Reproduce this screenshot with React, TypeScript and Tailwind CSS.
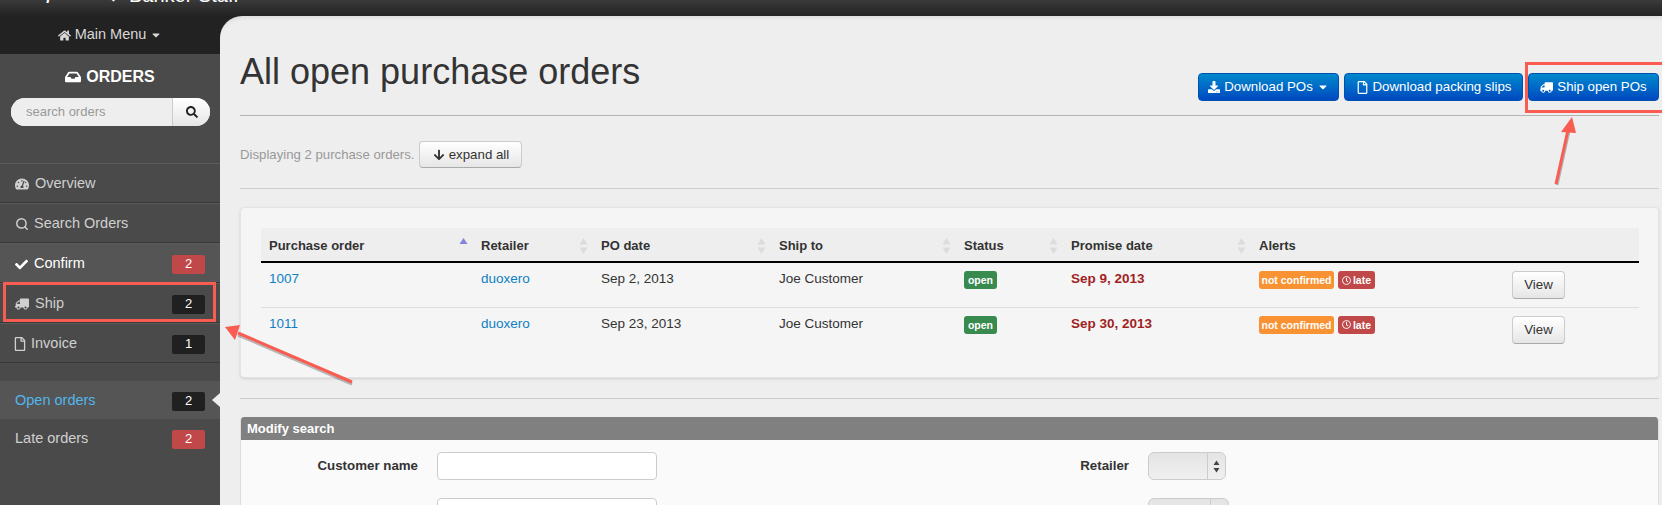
import { FaHome, FaInbox, FaSearch, FaTachometerAlt, FaCheck, FaTruck, FaRegFile, FaDownload, FaArrowDown, FaRegClock, FaCaretDown } from 'react-icons/fa';
import { Search } from 'lucide-react';
import type { ReactNode } from 'react';

function SideRow({ icon, label, count, tone, bright }: { icon: ReactNode; label: string; count: number; tone: 'dark' | 'red'; bright?: boolean }) {
  return (
    <div className={`flex h-[40px] items-center border-b border-b-[#383838] border-t border-t-[#5a5a5a] pl-[15px] pr-[15px] pt-[2px] text-[14.5px] ${bright ? 'bg-[#555555] text-white' : 'text-[#d0d0d0]'}`}>
      {icon}
      <span className="flex-1">{label}</span>
      {count > 0 && <Badge count={count} tone={tone} />}
    </div>
  );
}

function Badge({ count, tone }: { count: number; tone: 'dark' | 'red' }) {
  return (
    <span className={`flex h-[19px] w-[33px] items-center justify-center rounded-[2px] text-[13px] text-white ${tone === 'red' ? 'bg-[#c04848]' : 'bg-[#202020]'}`}>
      {count}
    </span>
  );
}

function BlueButton({ children }: { children: ReactNode }) {
  return (
    <button className="flex h-[28px] items-center justify-center rounded-[4px] border border-[#0050b0] bg-gradient-to-b from-[#0088cc] to-[#0048c0] text-[13.3px] text-white">
      {children}
    </button>
  );
}

function SortArrows({ active }: { active?: boolean }) {
  return (
    <svg width="9" height="16" viewBox="0 0 9 16" className="shrink-0">
      {active ? (
        <path d="M4.5 0 L8.5 6 L0.5 6 Z" fill="#8484d8" />
      ) : (
        <>
          <path d="M4.5 0 L8.5 6.5 L0.5 6.5 Z" fill="#dcdcdc" />
          <path d="M4.5 16 L8.5 9.5 L0.5 9.5 Z" fill="#dcdcdc" />
        </>
      )}
    </svg>
  );
}

function Th({ label, arrows, active }: { label?: string; arrows?: boolean; active?: boolean }) {
  return (
    <th className="h-[34px] border-b-2 border-b-black p-0 pl-[8px] pr-[5px] pt-[2px] text-left text-[13px] font-bold text-[#333333]">
      <div className="flex items-center justify-between">
        <span>{label}</span>
        {arrows && <SortArrows active={active} />}
      </div>
    </th>
  );
}

const orders = [
  { id: '1007', poDate: 'Sep 2, 2013', promise: 'Sep 9, 2013' },
  { id: '1011', poDate: 'Sep 23, 2013', promise: 'Sep 30, 2013' },
];

function OrderRow({ id, poDate, promise, last }: { id: string; poDate: string; promise: string; last: boolean }) {
  const cell = 'h-[45px] p-0 pl-[8px] pt-[6px] align-top text-[13.5px] leading-[20px]';
  return (
    <tr className={last ? '' : 'border-b border-b-[#dddddd]'}>
      <td className={`${cell} text-[#0f80c4]`}>{id}</td>
      <td className={`${cell} text-[#0f80c4]`}>duoxero</td>
      <td className={`${cell} text-[#333333]`}>{poDate}</td>
      <td className={`${cell} text-[#333333]`}>Joe Customer</td>
      <td className={cell}>
        <span className="mt-[2px] flex h-[18px] w-[33px] items-center justify-center rounded-[3px] bg-[#398a4f] text-[10.5px] font-bold text-white">open</span>
      </td>
      <td className={`${cell} font-bold text-[#a01f24]`}>{promise}</td>
      <td className={cell}>
        <div className="mt-[2px] flex gap-[4px]">
          <span className="flex h-[18px] w-[75px] items-center justify-center rounded-[3px] bg-[#f89232] text-[10.5px] font-bold whitespace-nowrap text-white">not confirmed</span>
          <span className="flex h-[18px] w-[37px] items-center justify-center gap-[2px] rounded-[3px] bg-[#c04848] text-[10.5px] font-bold text-white">
            <FaRegClock className="text-[9px]" />late
          </span>
        </div>
      </td>
      <td className={cell}>
        <button className="mt-[2px] h-[28px] w-[53px] rounded-[4px] border border-[#cccccc] border-b-[#aaaaaa] bg-gradient-to-b from-white to-[#e6e6e6] text-[13.3px] text-[#333333]">View</button>
      </td>
    </tr>
  );
}

function SelectBox({ width }: { width: string }) {
  return (
    <div className={`flex h-[28px] ${width} rounded-[6px] border border-[#cccccc] bg-gradient-to-b from-[#e4e4e4] to-[#f0f0f0]`}>
      <div className="flex-1" />
      <div className="flex w-[18px] items-center justify-center border-l border-l-[#cccccc]">
        <svg width="7" height="13" viewBox="0 0 7 13">
          <path d="M3.5 0.5 L6.5 5 L0.5 5 Z M3.5 12.5 L6.5 8 L0.5 8 Z" fill="#444444" />
        </svg>
      </div>
    </div>
  );
}

export default function App() {
  return (
    <div className="relative h-[505px] w-[1662px] overflow-hidden bg-[#222222] font-['Liberation_Sans',Arial,sans-serif]">
      {/* top nav, mostly cropped off */}
      <div className="h-[16px] overflow-hidden bg-gradient-to-b from-[#3a3a3a] to-[#222222] pl-[20px]">
        <div className="-mt-[17px] flex h-[24px] items-center leading-[24px] text-white">
          <span className="w-[88px] text-[15px] font-bold italic whitespace-nowrap">shopatron</span>
          <span className="w-[21px] text-[14px]">◆</span>
          <span className="text-[20px] whitespace-nowrap">Banker Staff</span>
        </div>
      </div>

      <div className="flex h-[489px]">
        {/* sidebar */}
        <aside className="w-[220px] shrink-0">
          <div className="flex h-[38px] items-center justify-center gap-[4px] text-[14.5px] text-[#d8d8d8]">
            <FaHome className="text-[13px]" />
            <span>Main Menu</span>
            <FaCaretDown className="text-[12px]" />
          </div>
          <div className="relative h-[451px] bg-[#4a4a4a]">
            <div className="h-[109px] px-[11px] pt-[11px]">
              <div className="flex items-center justify-center gap-[5px] text-[16px] font-bold text-white">
                <FaInbox className="text-[16px]" />
                ORDERS
              </div>
              <div className="mt-[9px] flex h-[28px] w-[199px] overflow-hidden rounded-full bg-[#eeeeee]">
                <input placeholder="search orders" className="w-[161px] bg-[#eeeeee] pl-[15px] text-[13px] outline-none placeholder:text-[#999999]" />
                <div className="flex flex-1 items-center justify-center border-l border-l-[#cccccc] bg-gradient-to-b from-white to-[#e6e6e6]">
                  <FaSearch className="text-[12px] text-[#222222]" />
                </div>
              </div>
            </div>
            <SideRow icon={<FaTachometerAlt className="mr-[6px] text-[14px]" />} label="Overview" count={0} tone="dark" />
            <SideRow icon={<Search size={14} strokeWidth={2.5} className="mr-[5px]" />} label="Search Orders" count={0} tone="dark" />
            <SideRow bright icon={<FaCheck className="mr-[6px] text-[13px]" />} label="Confirm" count={2} tone="red" />
            <SideRow icon={<FaTruck className="mr-[6px] -scale-x-100 text-[14px]" />} label="Ship" count={2} tone="dark" />
            <SideRow icon={<FaRegFile className="-ml-[2px] mr-[4px] text-[14px]" />} label="Invoice" count={1} tone="dark" />
            <div className="h-[18px]" />
            <div className="relative flex h-[38px] items-center bg-[#555555] pl-[15px] pr-[15px] pt-[2px] text-[14.5px] text-[#52b6ec]">
              <span className="flex-1">Open orders</span>
              <Badge count={2} tone="dark" />
              <span className="absolute right-0 top-[12px] h-0 w-0 border-y-[7px] border-r-[8px] border-y-transparent border-r-[#eeeeee]" />
            </div>
            <div className="flex h-[38px] items-center pl-[15px] pr-[15px] pt-[2px] text-[14.5px] text-[#d0d0d0]">
              <span className="flex-1">Late orders</span>
              <Badge count={2} tone="red" />
            </div>
          </div>
        </aside>

        {/* main panel */}
        <main className="flex-1 rounded-tl-[22px] bg-[#eeeeee] pl-[20px] pr-[3px] shadow-[inset_0_6px_6px_-6px_rgba(0,0,0,0.15)]">
          <div className="flex h-[100px] items-start justify-between border-b border-b-[#b4b4b4]">
            <h1 className="mt-[36px] text-[36px] leading-[40px] font-normal text-[#333333]">All open purchase orders</h1>
            <div className="mt-[57px] flex gap-[5px]">
              <BlueButton>
                <span className="flex w-[139px] items-center justify-center gap-[4px]"><FaDownload className="text-[12px]" />Download POs<FaCaretDown className="text-[12px]" /></span>
              </BlueButton>
              <BlueButton>
                <span className="flex w-[177px] items-center justify-center gap-[4px]"><FaRegFile className="text-[13px]" />Download packing slips</span>
              </BlueButton>
              <BlueButton>
                <span className="flex w-[129px] items-center justify-center gap-[4px]"><FaTruck className="-scale-x-100 text-[13px]" />Ship open POs</span>
              </BlueButton>
            </div>
          </div>

          <div className="flex h-[73px] items-start gap-[5px] border-b border-b-[#cccccc] pt-[25px] text-[13.2px] text-[#999999]">
            <span className="leading-[27px]">Displaying 2 purchase orders.</span>
            <button className="flex h-[27px] w-[103px] items-center justify-center gap-[4px] rounded-[4px] border border-[#cccccc] border-b-[#aaaaaa] bg-gradient-to-b from-white to-[#e6e6e6] text-[13.3px] text-[#333333]">
              <FaArrowDown className="text-[12px]" />expand all
            </button>
          </div>

          <div className="mt-[18px] h-[171px] rounded-[4px] border border-[#e4e4e4] bg-[#f5f5f5] pl-[20px] pr-[19px] pt-[20px] shadow-sm">
            <table className="w-[1378px] table-fixed border-collapse">
              <colgroup>
                <col className="w-[212px]" />
                <col className="w-[120px]" />
                <col className="w-[178px]" />
                <col className="w-[185px]" />
                <col className="w-[107px]" />
                <col className="w-[188px]" />
                <col className="w-[253px]" />
                <col className="w-[135px]" />
              </colgroup>
              <thead className="bg-[#eeeeee]">
                <tr>
                  <Th label="Purchase order" arrows active />
                  <Th label="Retailer" arrows />
                  <Th label="PO date" arrows />
                  <Th label="Ship to" arrows />
                  <Th label="Status" arrows />
                  <Th label="Promise date" arrows />
                  <Th label="Alerts" />
                  <Th />
                </tr>
              </thead>
              <tbody>
                {orders.map((o, i) => (
                  <OrderRow key={o.id} id={o.id} poDate={o.poDate} promise={o.promise} last={i === orders.length - 1} />
                ))}
              </tbody>
            </table>
          </div>

          <div className="mt-[20px] border-t border-t-[#cccccc]" />

          <div className="mt-[18px] h-[100px] overflow-hidden rounded-t-[4px] border-x border-x-[#dddddd] bg-[#fafafa]">
            <div className="flex h-[23px] items-center bg-[#808080] pl-[6px] text-[13px] font-bold text-white">Modify search</div>
            <div className="flex flex-col gap-[18px] pt-[12px]">
              <div className="flex items-center text-[13.3px] font-bold text-[#333333]">
                <span className="w-[177px] text-right">Customer name</span>
                <input className="ml-[19px] h-[28px] w-[220px] rounded-[4px] border border-[#cccccc] bg-white" />
                <span className="w-[472px] text-right">Retailer</span>
                <div className="ml-[19px]"><SelectBox width="w-[78px]" /></div>
              </div>
              <div className="flex items-center">
                <span className="w-[177px]" />
                <input className="ml-[19px] h-[28px] w-[220px] rounded-[4px] border border-[#cccccc] bg-white" />
                <span className="w-[472px]" />
                <div className="ml-[19px]"><SelectBox width="w-[81px]" /></div>
              </div>
            </div>
          </div>
        </main>
      </div>

      {/* red screenshot annotations */}
      <div className="absolute left-[3px] top-[282px] h-[40px] w-[213px] border-[3px] border-[#f95c50]" />
      <div className="absolute left-[1525px] top-[62px] h-[51px] w-[137px] border-[3px] border-r-0 border-[#f95c50]" />
      <svg className="pointer-events-none absolute left-0 top-0" width="1662" height="505" viewBox="0 0 1662 505">
        <path d="M352 384 L238 335" stroke="#00000040" strokeWidth="3" />
        <path d="M352 382 L238 333" stroke="#f95c50" strokeWidth="3" />
        <path d="M225 327 L240 325 L235 340 Z" fill="#f95c50" />
        <path d="M1557 185 L1569 131" stroke="#00000040" strokeWidth="3" />
        <path d="M1556 184 L1568 130" stroke="#f95c50" strokeWidth="3" />
        <path d="M1572 117 L1561 132 L1576 133 Z" fill="#f95c50" />
      </svg>
    </div>
  );
}
